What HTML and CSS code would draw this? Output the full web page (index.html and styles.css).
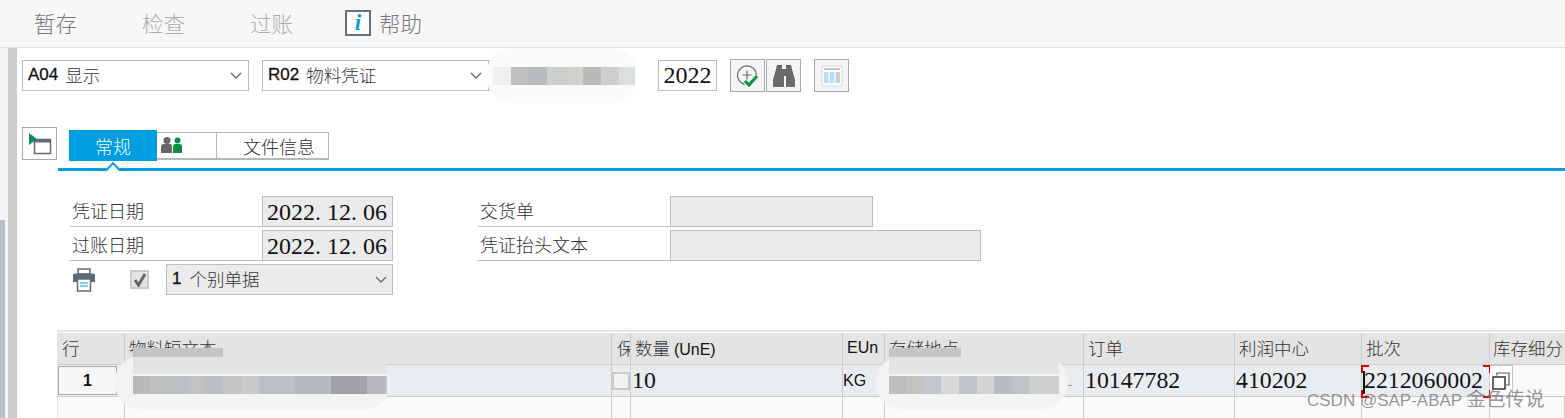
FILE: index.html
```html
<!DOCTYPE html>
<html lang="zh">
<head>
<meta charset="utf-8">
<title>物料凭证</title>
<link rel="stylesheet" href="styles.css">
</head>
<body>
<div class="page">
  <header class="toolbar">
    <span class="tool dark t1">暂存</span>
    <span class="tool t2">检查</span>
    <span class="tool t3">过账</span>
    <span class="info-icon">i</span>
    <span class="tool dark">帮助</span>
  </header>
  <div class="main">
    <aside class="rail"><div class="rail-a"><div class="rail-blue"></div></div><div class="rail-b"></div><div class="rail-c"></div></aside>
    <div class="content">
      <div class="row-top">
        <div class="select s-top"><b>A04</b><span>显示</span><svg class="chev" viewBox="0 0 12 7"><path d="M1 1l5 5 5-5"/></svg></div>
        <div class="select s-top s-gap"><b>R02</b><span>物料凭证</span><svg class="chev" viewBox="0 0 12 7"><path d="M1 1l5 5 5-5"/></svg></div>
        <div class="hidden-field"></div>
        <div class="year">2022</div>
        <button class="icon-btn b-clock"><svg viewBox="0 0 24 24" width="24" height="24"><path d="M8.500 20.500A9.500 9.500 0 1 1 20.500 11" fill="none" stroke="#6d6d6d" stroke-width="1.300"/><path d="M11 6.500v9M6.500 11h9" stroke="#6d6d6d" stroke-width="1.200"/><path d="M9 17l4 4 8-9" fill="none" stroke="#0a9443" stroke-width="3"/></svg></button>
        <button class="icon-btn"><svg viewBox="0 0 24 24" width="24" height="24"><path d="M5 1h5v4h4V1h5l1 4 3 11v7h-9V12h-2v11H1v-7L4 5z" fill="#6a6a6a"/></svg></button>
        <button class="icon-btn b-table"><svg viewBox="0 0 22 22" width="22" height="22"><rect x="1" y="1" width="20" height="20" fill="#fff" stroke="#cfd6da"/><path d="M3 3h16v2H3z" fill="#c4c8cc"/><path d="M3 7h4.500v11H3z" fill="#b5e0f5"/><path d="M8.800 7h4.500v11H8.800z" fill="#b5e0f5"/><path d="M14.600 7h4.500v11h-4.500z" fill="#cfcfd2"/></svg></button>
      </div>
      <div class="row-tabs">
        <button class="icon-btn b-screen"><svg viewBox="0 0 24 24" width="24" height="24"><rect x="6.500" y="7.500" width="16" height="14" fill="#fff" stroke="#5f6b75" stroke-width="1.500"/><path d="M6 7.500h17v3H6z" fill="#5f6b75"/><path d="M1 1l8 6-8 6z" fill="#0a8f5a"/></svg></button>
        <div class="tabs">
          <div class="tab tab-on">常规</div>
          <div class="tab tab-people"><svg viewBox="0 0 24 16" width="24" height="16"><circle cx="7" cy="3.500" r="3.500" fill="#666"/><path d="M1 16v-6q0-3 3-3h6q2 0 2 3v6z" fill="#666"/><circle cx="17.500" cy="3.500" r="3" fill="#0a8f4a"/><path d="M13 16v-6q0-3 2.500-3h4Q22 7 22 10v6z" fill="#0a8f4a"/></svg></div>
          <div class="tab tab-file">文件信息</div>
        </div>
      </div>
      <div class="tab-line"><span class="notch"></span></div>
      <div class="form">
        <div class="label">凭证日期</div><div class="field date">2022. 12. 06</div><div></div>
        <div class="label">交货单</div><div class="field f-short"></div>
        <div class="label">过账日期</div><div class="field date">2022. 12. 06</div><div></div>
        <div class="label">凭证抬头文本</div><div class="field f-long"></div>
        <div class="print-row">
          <svg class="printer" viewBox="0 0 24 24" width="24" height="24"><path d="M6 1h12v5H6z" fill="none" stroke="#5f6b75" stroke-width="1.500"/><path d="M1 7q0-1.500 1.500-1.500h19Q23 5.500 23 7v7H1z" fill="#5f6b75"/><path d="M5.500 11h13v12h-13z" fill="#fff" stroke="#5f6b75" stroke-width="1.500"/><path d="M8 15h8M8 18h8" stroke="#0a9bdc"/></svg>
          <span class="check"><svg viewBox="0 0 14 14" width="14" height="14"><path d="M2 7l3.500 5L12 1" fill="none" stroke="#666" stroke-width="3"/></svg></span>
          <div class="select s-form"><b>1</b><span>个别单据</span><svg class="chev" viewBox="0 0 12 7"><path d="M1 1l5 5 5-5"/></svg></div>
        </div>
      </div>
      <div class="table">
        <div class="th">行</div><div class="th">物料短文本</div><div class="th th-clip">保</div><div class="th">数量 <span class="latin">(UnE)</span></div><div class="th latin">EUn</div><div class="th">存储地点</div><div class="th">订单</div><div class="th">利润中心</div><div class="th">批次</div><div class="th th-clip-b">库存细分</div>
        <div class="td td-line"><span class="line-no">1</span></div><div class="td"></div><div class="td td-box"><span class="box"></span></div><div class="td num">10</div><div class="td latin kg">KG</div><div class="td td-more">...</div><div class="td num">10147782</div><div class="td num">410202</div><div class="td num focus"><span class="caret"></span>2212060002<i class="cnr c1"></i><i class="cnr c2"></i><i class="cnr c3"></i><i class="cnr c4"></i></div><div class="td td-copy"><span class="copy-btn"><svg viewBox="0 0 18 18" width="18" height="18"><path d="M5 3.500V1h12v12h-3" fill="none" stroke="#555" stroke-width="1.200"/><rect x="1" y="5" width="12" height="12" fill="#fff" stroke="#333" stroke-width="1.500"/></svg></span></div>
        <div class="te"></div><div class="te"></div><div class="te"></div><div class="te"></div><div class="te"></div><div class="te"></div><div class="te"></div><div class="te"></div><div class="te"></div><div class="te"></div>
      </div>
    </div>
  </div>
  <div class="blur blur-top"><span></span></div>
  <div class="blur blur-name"><span></span></div>
  <div class="blur blur-store"><span></span></div>
  <div class="watermark">CSDN @SAP-ABAP <span class="wm-cjk">金色传说</span></div>
</div>
</body>
</html>
```
FILE: styles.css
```css
* { box-sizing: border-box; }
html, body { margin: 0; padding: 0; }
body { background: #fff; color: #222; font-family: "Noto Sans CJK SC", "Liberation Sans", sans-serif; }
.page { position: relative; width: 1565px; height: 418px; overflow: hidden; display: flex; flex-direction: column; }

.toolbar { flex: none; height: 48px; background: #f7f7f7; border-bottom: 1px solid #e2e2e2; display: flex; align-items: center; padding: 0 0 2px 34px; font-size: 21.500px; font-weight: 300; }
.tool { color: #a9adb0; line-height: 44px; }
.tool.dark { color: #75787a; }
.t1, .t2 { margin-right: 65px; }
.t3 { margin-right: 52px; }
.info-icon { width: 26px; height: 26px; margin-right: 8px; border: 2px solid #66717a; background: #fff; color: #0a9bdc; font: italic bold 23px/22px "Liberation Serif", serif; text-align: center; }

.main { flex: 1; display: flex; min-height: 0; }
.rail { flex: none; width: 22px; display: flex; }
.rail-a { width: 8px; background: #f5f5f5; position: relative; display: flex; align-items: flex-end; }
.rail-blue { width: 5px; height: 198px; background: #b3c0cc; }
.rail-b { width: 9px; background: #cdcdcd; }
.rail-c { width: 5px; background: #fbfdfe; }
.content { flex: 1; min-width: 0; }

.row-top { display: flex; align-items: center; height: 33px; margin-top: 11px; }
.select { display: flex; align-items: center; height: 31px; border: 1px solid #bdbdbd; background: #fff; padding: 0 0 2px 5px; font-size: 17.500px; font-weight: 300; position: relative; color: #333; }
.select b { font: 400 17px "Liberation Sans", sans-serif; color: #111; margin-right: 6px; -webkit-text-stroke: .3px #111; }
.chev { position: absolute; right: 6px; top: 11px; width: 12px; height: 7px; fill: none; stroke: #5f6b75; stroke-width: 1.300; }
.s-top { width: 227px; }
.s-top b { margin-right: 7px; }
.s-gap { margin-left: 13px; }
.hidden-field { width: 144px; height: 31px; border: 1px solid #bdbdbd; border-left: 0; }
.year { width: 59px; height: 31px; margin-left: 25px; border: 1px solid #bdbdbd; font: 24px/29px "Liberation Serif", serif; color: #111; text-align: center; }
.icon-btn { width: 35px; height: 33px; padding: 0; border: 1px solid #a8a8a8; background: #f5f5f5; display: flex; align-items: center; justify-content: center; }
.b-clock { margin-left: 13px; margin-right: 1px; }
.b-table { margin-left: 13px; }

.row-tabs { display: flex; height: 33px; margin-top: 35px; }
.b-screen { flex: none; background: #fff; }
.tabs { display: flex; margin-left: 12px; align-items: flex-start; margin-top: 3px; }
.tab { height: 28px; margin-top: 2px; border: 1px solid #b8b8b8; border-bottom-width: 2px; border-left: 0; display: flex; align-items: center; font-size: 18px; font-weight: 300; color: #333; background: #fff; }
.tab-on { width: 88px; height: 31px; margin-top: 0; background: #009de0; border: 0; color: #fff; justify-content: center; }
.tab-people { width: 60px; padding: 0 0 1px 3px; }
.tab-file { width: 112px; padding-left: 26px; }

.tab-line { position: relative; height: 3px; margin: 8px 0 0 36px; background: #009de0; }
.notch { position: absolute; left: 50px; top: -4px; width: 10px; height: 10px; background: #fff; border-top: 2px solid #009de0; border-left: 2px solid #009de0; transform: rotate(45deg); }

.form { display: grid; grid-template-columns: 192px 131px 85px 192px auto; grid-auto-rows: 31px; row-gap: 3px; margin: 25px 0 0 48px; justify-items: start; }
.label { width: 100%; height: 31px; border-bottom: 1px solid #bdbdbd; padding-left: 2px; font-size: 18px; font-weight: 300; line-height: 28px; color: #333; }
.field { height: 31px; border: 1px solid #bdbdbd; background: #ebebeb; }
.date { width: 131px; padding-left: 4px; font: 24px/30px "Liberation Serif", serif; color: #111; }
.f-short { width: 203px; }
.f-long { width: 311px; }
.print-row { grid-column: 1 / 3; display: flex; align-items: center; padding-left: 2px; height: 31px; width: 100%; }
.printer { flex: none; }
.check { flex: none; width: 19px; height: 19px; margin-left: 34px; display: flex; align-items: center; justify-content: center; border: 2px solid #cbcbcb; background: #e4e4e4; }
.s-form { width: 227px; margin-left: 17px; background: #ebebeb; }
.s-form b { margin-right: 8px; }
.s-form .chev { right: 5px; }

.table { display: grid; width: 1508px; margin: 35px 0 0 35px; padding-top: 1px; border-top: 2px solid #e6e6e6; border-left: 1px solid #e6e6e6; grid-template-columns: 67px 487px 19px 212px 42px 199px 151px 127px 128px 75px; grid-template-rows: 32px 32px 40px; }
.th, .td, .te { border-right: 1px solid #ccc; border-bottom: 1px solid #ccc; white-space: nowrap; overflow: hidden; }
.th { background: #e4e4e4; padding-left: 4px; font-size: 17.500px; font-weight: 300; line-height: 29px; color: #333; }
.th-clip { padding-left: 5px; }
.th-clip-b { padding-left: 3px; border-right: 0; }
.latin { font-family: "Liberation Sans", sans-serif; font-size: 16px; font-weight: 400; color: #111; }
.td { background: #e9edf0; position: relative; }
.num { padding-left: 1px; font: 23.800px/31px "Liberation Serif", serif; color: #111; }
.kg { line-height: 31px; font-size: 16px; padding-left: 0; }
.te { background: #fafafa; border-bottom: 0; }
.td-more { text-align: right; font-size: 10px; line-height: 34px; padding-right: 11px; color: #333; }
.td-line { padding: 1px 7px 1px 0; background: #e9edf0; }
.line-no { display: block; height: 29px; border: 1px solid #a8a8a8; background: #f7f7f7; font: bold 16px/27px "Liberation Sans", sans-serif; color: #111; text-align: center; }
.td-box { padding: 7px 0 0 0; }
.box { display: block; width: 18px; height: 18px; border: 2px solid #c9c9c9; background: #f2f2f2; }
.focus { overflow: visible; padding-left: 2px; }
.caret { position: absolute; left: 1px; top: 6px; width: 2px; height: 23px; background: #111; }
.cnr { position: absolute; width: 8px; height: 8px; border: 0 solid #e00000; }
.c1 { left: -1px; top: 0; border-width: 2px 0 0 2px; }
.c2 { right: -2px; top: 0; border-width: 2px 2px 0 0; }
.c3 { left: -1px; bottom: -2px; border-width: 0 0 2px 2px; }
.c4 { right: -2px; bottom: -2px; border-width: 0 2px 2px 0; }
.td-copy { background: #f9f9f9; border-right: 0; }
.copy-btn { display: flex; width: 23px; height: 31px; border: 1px solid #c4c4c4; border-left: 0; background: #fff; align-items: center; justify-content: center; }

.blur { position: absolute; display: flex; align-items: center; background: #f3f3f3; }
.blur span { display: block; }
.blur::before { content: ""; position: absolute; height: 18px; background: #e2e4e5; }
.blur::after { content: ""; position: absolute; height: 9px; background: #c4c4c4; }
.blur-top { left: 487px; top: 48px; width: 149px; height: 55px; border-radius: 24px; padding-left: 6px; background: #fafafa; }
.blur-top::before, .blur-top::after { display: none; }
.blur-top span { width: 142px; height: 18px; background: linear-gradient(90deg, #efefef 0 18px, #c0bfbd 18px 36px, #b9bcbe 36px 54px, #ccd0ce 54px 72px, #d0d1cd 72px 90px, #bcbab8 90px 108px, #cdd0ce 108px 126px, #dcdfe0 126px); }
.blur-name { left: 115px; top: 356px; width: 275px; height: 53px; border-radius: 25px; padding: 5px 0 0 18px; }
.blur-name::before { left: 18px; top: 0; width: 254px; }
.blur-name::after { left: 18px; top: -8px; width: 90px; }
.blur-name span { width: 254px; height: 18px; position: relative; background: linear-gradient(90deg, #b9bbbb 0 18px, #bfc1c1 18px 36px, #bcbfc3 36px 54px, #c1c3c3 54px 72px, #bcbfc1 72px 90px, #c4c6c6 90px 108px, #c9caca 108px 126px, #bcc0c3 126px 144px, #bec1c3 144px 162px, #b6babc 162px 198px, #a0a2a6 198px 234px, #b6b8bb 234px 252px, #c3c5c5 252px); }
.blur-store { left: 876px; top: 356px; width: 192px; height: 53px; border-radius: 26px; padding: 5px 0 0 13px; }
.blur-store::before { left: 13px; top: 0; width: 170px; }
.blur-store::after { left: 13px; top: -8px; width: 72px; }
.blur-store span { width: 170px; height: 18px; position: relative; background: linear-gradient(90deg, #bdbfbf 0 17px, #c2c3c0 17px 35px, #c2c6d0 35px 52px, #d6d8da 52px 70px, #c0c4c8 70px 88px, #d2d4d6 88px 105px, #b9bcc0 105px 123px, #c0c3c6 123px 140px, #ccced0 140px); }
.watermark { position: absolute; left: 1307px; top: 387px; font: 17px/24px "Liberation Sans", "Noto Sans CJK SC", sans-serif; color: rgba(110, 110, 110, .72); white-space: nowrap; }
.wm-cjk { font-size: 19.500px; }
```
